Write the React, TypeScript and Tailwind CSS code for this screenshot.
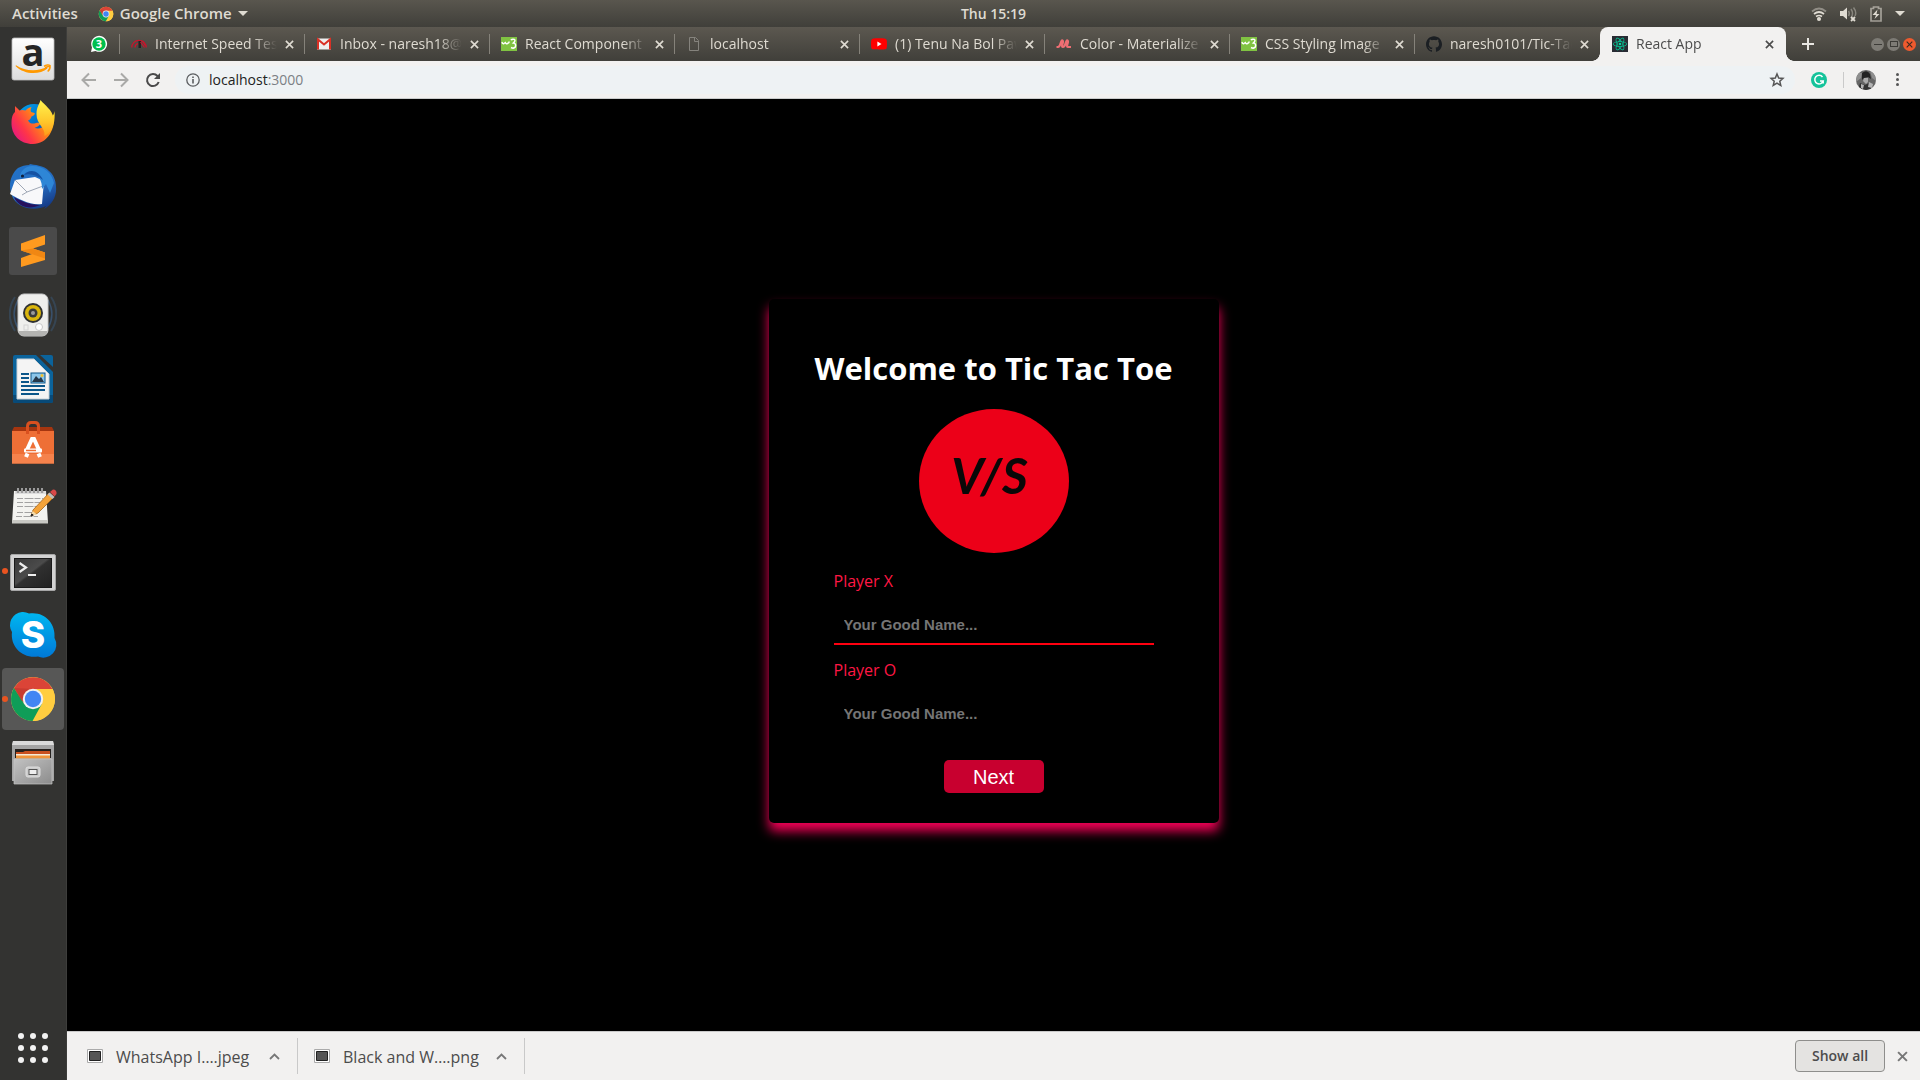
import React from "react";
import { SiGithub, SiYoutube, SiReact } from "react-icons/si";

const ui = "font-['Open_Sans','Noto_Sans',sans-serif]";

function ChromeIcon({ size }: { size: number }) {
  return (
    <svg width={size} height={size} viewBox="0 0 48 48" aria-hidden="true">
      <circle cx="24" cy="24" r="22" fill="#fc4" />
      <path d="M24 24 43.4 14A22 22 0 0 0 5 13L14.5 28Z" fill="#db4437" />
      <path d="M24 14H43.6A22 22 0 0 1 23.5 46L32.8 29Z" fill="#ffcd40" />
      <path d="M5 13A22 22 0 0 0 23.5 46L32.8 29 24 34 15.3 29Z" fill="#0f9d58" />
      <path d="M5 13 12.5 26 16 19Q20 14 26 14Z" fill="#b9352b" opacity=".55" />
      <circle cx="24" cy="24" r="10.2" fill="#f1f1f1" />
      <circle cx="24" cy="24" r="8.2" fill="#4285f4" />
    </svg>
  );
}

function AmazonIcon() {
  return (
    <svg width="48" height="48" viewBox="0 0 48 48" className="overflow-visible" aria-hidden="true">
      <defs>
        <linearGradient id="amz" x2="0" y2="1">
          <stop stopColor="#fff" />
          <stop offset="1" stopColor="#dcdcdc" />
        </linearGradient>
      </defs>
      <rect x="3" y="3" width="42" height="42" rx="2" fill="url(#amz)" stroke="#bdbdbd" strokeWidth=".8" />
      <text x="24" y="31" textAnchor="middle" fontFamily="Open Sans, sans-serif" fontWeight="700" fontSize="38" fill="#252525">a</text>
      <path d="M6.500 31c9 9 24 9 32 2.500l-.8-1.700C30 36.500 16 36.500 7 30.200Z" fill="#ff9900" />
      <path d="M35 31.300c2-1.500 5-1.500 6-.8.300 2-.7 4.700-2.300 6M36 32.500l4.500-1.200" fill="none" stroke="#ff9900" strokeWidth="1.500" />
    </svg>
  );
}

function FirefoxIcon() {
  return (
    <svg width="48" height="48" viewBox="0 0 48 48" aria-hidden="true">
      <defs>
        <linearGradient id="ffa" x1="0" y1=".8" x2="1" y2=".2">
          <stop stopColor="#e31587" />
          <stop offset=".3" stopColor="#ff3647" />
          <stop offset=".65" stopColor="#ff8a16" />
          <stop offset="1" stopColor="#ffe226" />
        </linearGradient>
        <linearGradient id="ffb" x2="0" y2="1">
          <stop stopColor="#fff44f" />
          <stop offset=".6" stopColor="#ffc72b" />
          <stop offset="1" stopColor="#ff9a1a" />
        </linearGradient>
        <linearGradient id="ffc" x2="1" y2="1">
          <stop stopColor="#00a8f0" />
          <stop offset="1" stopColor="#0a3fa8" />
        </linearGradient>
      </defs>
      <circle cx="25" cy="23" r="18" fill="url(#ffc)" />
      <path d="M6 7c1 1 3 3 4.500 4.500 2-.8 4-.7 6-.1C18 9.500 20 8.500 22.500 8c-1 2-1 3.500-.5 5l3.500 1c1 1-.5 2.500-3 3.500-.5 1.500-1 3-3.500 4 2 3.500 5 3.500 8 2.500 3-1 5 .5 3.500 2-2 2-4 2.500-5 3 8 2 14-3 13-12 3 2 6 1 7-5 1.500 19-7.500 33-21.500 33C11 45 2 36 2.500 23 2.800 17 4 15 6 13Z" fill="url(#ffa)" />
      <path d="M31.500 1c4 5 12 10 13 18 .8 9-3 15-9 18 1-9-8-11-8-22 0-7 3-10 4-14Z" fill="url(#ffb)" />
    </svg>
  );
}

function ThunderbirdIcon() {
  return (
    <svg width="48" height="48" viewBox="0 0 48 48" aria-hidden="true">
      <defs>
        <linearGradient id="tba" x1=".2" x2=".7" y2="1">
          <stop stopColor="#2173c9" />
          <stop offset=".6" stopColor="#2569bd" />
          <stop offset="1" stopColor="#143a86" />
        </linearGradient>
      </defs>
      <path d="M20 1c5 1 15 1 20 7 4 3 7 9 7 16 1 9-4 18-12 22l2-3c-12 6-29 2-34-10C-1 23 1 12 9 5c4-2 7-3 12-3Z" fill="url(#tba)" />
      <path d="M5 34c6 3 14 8 26 8-10 5-22 2-26-8Z" fill="#26115e" />
      <path d="M6 17 26 14 35 18 33 41C22 43 10 36 1 31Z" fill="#f8f8fa" />
      <path d="m6 17 12 12 16-6M18 29l-5 3" fill="none" stroke="#9fa7b5" strokeWidth="1" />
      <path d="M11 16C15 8 24 6 28 12c4 5 5 8 5 14l4-5 4 9 4-10c-2-10-10-17-22-17C16 3 10 9 11 16Z" fill="#2e86d6" />
      <path d="M15 12c5-6 14-6 19 5-6-5-13-7-19-5Z" fill="#1552a3" />
      <circle cx="13.500" cy="13" r="1.600" fill="#10203c" />
    </svg>
  );
}

function SublimeIcon() {
  return (
    <svg width="48" height="48" viewBox="0 0 48 48" aria-hidden="true">
      <rect width="48" height="48" rx="3" fill="#4a4a4a" />
      <path d="M12 16.500 36 8v9.500L24 21.500l12 4V33L12 40v-9l11-4-11-3.500Z" fill="#ff9a1f" />
      <path d="m12 23.500 24 8v-6l-12-4Z" fill="#f08713" />
    </svg>
  );
}

function SpeakerIcon() {
  return (
    <svg width="48" height="48" viewBox="0 0 48 48" aria-hidden="true">
      <g fill="none" stroke="#3d6695">
        <path d="M6 6C-1 16-1 30 6 40M42 6c7 10 7 24 0 34" opacity=".35" strokeWidth="2" />
        <path d="M9 9C4 18 4 28 9 37M39 9c5 9 5 19 0 28" opacity=".6" strokeWidth="1.500" />
      </g>
      <rect x="9" y="3" width="30" height="42" rx="6" fill="#efefed" stroke="#c9c9c9" />
      <path d="M10 40h28v2q-1 3-5 3H15q-4 0-5-3Z" fill="#b3b3b1" />
      <circle cx="24" cy="22" r="10" fill="#2f3133" />
      <circle cx="24" cy="22" r="8" fill="#d9b50c" />
      <circle cx="24" cy="22" r="4.500" fill="#3a3b3c" />
      <circle cx="24" cy="22" r="2" fill="#9a9a9a" />
      <circle cx="30" cy="36" r="3.500" fill="#fff" stroke="#c8c8c8" />
      <rect x="15" y="34" width="4" height="5" fill="none" stroke="#d4d4d4" />
    </svg>
  );
}

function WriterIcon() {
  return (
    <svg width="48" height="48" viewBox="0 0 48 48" aria-hidden="true">
      <path d="M6 0H27L44 17V46q0 2-2 2H6q-2 0-2-2V2Q4 0 6 0Z" fill="#0b639b" />
      <path d="M4 40h40v6q0 2-2 2H6q-2 0-2-2Z" fill="#084a78" />
      <path d="M8 4H25L40 19V44H8Z" fill="#f4f4f4" stroke="#c7d0d6" />
      <path d="M31 0h11q2 0 2 2v10Z" fill="#0b639b" />
      <path d="M12 19h8M12 23h8M12 27h8M12 31h24M12 35h24M12 39h18" stroke="#0b568a" strokeWidth="2" />
      <rect x="22" y="18" width="14" height="10" fill="#8cc6ea" stroke="#0b568a" />
      <path d="m23 27 4-6 3 3 2-2 3 5Z" fill="#26384a" />
      <circle cx="33" cy="20.500" r="1.500" fill="#f2c230" />
    </svg>
  );
}

function SoftwareIcon() {
  return (
    <svg width="48" height="48" viewBox="0 -1 48 48" aria-hidden="true">
      <path d="M3 11 5 7H43l2 4V20H3Z" fill="#a5350f" />
      <path d="M3 11H45V43.500H3Z" fill="#ee6f36" />
      <path d="M3 34H45v9.500H3Z" fill="#f5824c" />
      <path d="M18.500 14V6.500Q18.500 2.500 22 2.500h4q3.500 0 3.500 4V14" fill="none" stroke="#d9501f" strokeWidth="3" />
      <path d="m17.500 31 5.500-12h2l5.500 12M17 37l1.500-3.500M31 37l-1.500-3.500" fill="none" stroke="#fff" strokeWidth="4" />
      <rect x="15" y="28.500" width="18" height="4" rx="1" fill="#fff" />
      <path d="M17 30.500h10" stroke="#ee6f36" strokeWidth="1.500" />
    </svg>
  );
}

function NotesIcon() {
  return (
    <svg width="48" height="48" viewBox="0 0 48 48" aria-hidden="true">
      <path d="M5 8H37l2 32H3Z" fill="#f3f3f0" />
      <path d="M3.200 37H39v3.500H3Z" fill="#c9c9c4" />
      <path d="M6 8h31v3H6Z" fill="#ddd" />
      <g stroke="#4a4a4a" strokeWidth="2.200" fill="none">
        <path d="M9 5v5M13 5v5M17 5v5M21 5v5M25 5v5M29 5v5M33 5v5" />
      </g>
      <g stroke="#fff" strokeWidth=".9">
        <path d="M9 5v5M13 5v5M17 5v5M21 5v5M25 5v5M29 5v5M33 5v5" />
      </g>
      <g stroke="#a2a2a2" strokeWidth="1.100" strokeDasharray="6 1.500 9 1">
        <path d="M8 15.500h26M8 19.500h25M8 23.500h22M8 29.500h15M7 33.500h22" />
      </g>
      <path d="m22 33 2-6L40 10l5 4-16 16Z" fill="#f3a33a" stroke="#a5651b" strokeWidth=".8" />
      <path d="m22 33 1.500-5 4.500 3.500Z" fill="#f2d9a8" />
      <path d="m22 33 .7-2 1.500 1Z" stroke="#222" fill="#222" />
      <path d="m38.500 11.500 5 4.500 2-2-5-4.500Z" fill="#bdbdbd" />
      <path d="m41 9 3-2.500q4 0 3.500 4.500L45.500 13.500Z" fill="#d84848" />
    </svg>
  );
}

function TerminalIcon() {
  return (
    <svg width="48" height="48" viewBox="0 -2 48 48" aria-hidden="true">
      <defs>
        <linearGradient id="term" x2="1" y2="1">
          <stop stopColor="#3a3a3a" />
          <stop offset=".45" stopColor="#4b4b4b" />
          <stop offset=".5" stopColor="#303030" />
          <stop offset="1" stopColor="#222" />
        </linearGradient>
      </defs>
      <rect x="1.500" y="5.500" width="45" height="36" rx="1.500" fill="#d2d2d2" stroke="#a6a6a6" />
      <rect x="5" y="9" width="38" height="30" fill="#1a1a1a" />
      <rect x="6" y="10" width="36" height="28" fill="url(#term)" />
      <path d="m10.500 14 6.500 4.500-6.500 4.500M19 26h8" fill="none" stroke="#eee" strokeWidth="2.200" />
    </svg>
  );
}

function SkypeIcon() {
  return (
    <svg width="48" height="48" viewBox="0 0 48 48" className="overflow-visible" aria-hidden="true">
      <defs>
        <linearGradient id="sky" x2="0" y2="1">
          <stop stopColor="#00b7f0" />
          <stop offset="1" stopColor="#0078d7" />
        </linearGradient>
      </defs>
      <path d="M13 1a12.500 12.500 0 0 1 7 1.500C35 0 47 12 45.500 27A13 13 0 0 1 29 45.500C14 48 1 36 3 21A13 13 0 0 1 13 1Z" fill="url(#sky)" />
      <text x="24" y="37" textAnchor="middle" fontFamily="Inter, sans-serif" fontWeight="800" fontSize="37" fill="#fff">S</text>
    </svg>
  );
}

function FilesIcon() {
  return (
    <svg width="48" height="48" viewBox="0 0 48 48" aria-hidden="true">
      <defs>
        <linearGradient id="fil" x2="1" y2="1">
          <stop stopColor="#c2c2c2" />
          <stop offset="1" stopColor="#8c8c8c" />
        </linearGradient>
      </defs>
      <path d="M4 2H44l1 4V42H3V6Z" fill="#a4a4a4" />
      <path d="M4 2H44l1 4H3Z" fill="#dadada" />
      <rect x="6" y="10" width="36" height="9" fill="#26211e" />
      <path d="M7 13h7l2-1h25v7H7Z" fill="#c8501f" />
      <path d="M7 15h34v4H7Z" fill="#f5ead9" />
      <path d="M7 16.500h34v3H7Z" fill="#f0953b" />
      <path d="M5 20H43V45H5Z" fill="url(#fil)" stroke="#c5c5c5" strokeWidth=".7" />
      <rect x="17" y="28" width="14" height="10" rx="2" fill="#ccc" stroke="#dedede" />
      <rect x="20" y="30.500" width="8" height="5" fill="#eee" stroke="#555" />
    </svg>
  );
}

const dock = [
  { label: "Amazon", icon: <AmazonIcon /> },
  { label: "Firefox", icon: <FirefoxIcon /> },
  { label: "Thunderbird", icon: <ThunderbirdIcon /> },
  { label: "Sublime Text", icon: <SublimeIcon /> },
  { label: "Rhythmbox", icon: <SpeakerIcon /> },
  { label: "LibreOffice Writer", icon: <WriterIcon /> },
  { label: "Ubuntu Software", icon: <SoftwareIcon /> },
  { label: "Text Editor", icon: <NotesIcon /> },
  { label: "Terminal", icon: <TerminalIcon />, running: true },
  { label: "Skype", icon: <SkypeIcon /> },
  { label: "Google Chrome", icon: <ChromeIcon size={48} />, running: true, active: true },
  { label: "Files", icon: <FilesIcon /> },
];

function Dock() {
  return (
    <nav aria-label="Dock" className="flex w-[67px] shrink-0 flex-col items-center border-r border-[#3d3d3b] bg-[#333331]">
      {dock.map((d) => (
        <button key={d.label} aria-label={d.label} className="relative flex h-16 w-full items-center justify-center">
          <span className={d.active ? "flex size-[62px] items-center justify-center rounded bg-[#575756]" : "flex size-[62px] items-center justify-center"}>
            {d.icon}
          </span>
          {d.running && <span className="absolute top-1/2 left-0.5 size-1.5 -translate-y-1/2 rounded-full bg-[#e95420]" />}
        </button>
      ))}
      <button aria-label="Show Applications" className="mt-auto mb-[17px] grid grid-cols-3 gap-1.5">
        {Array.from({ length: 9 }, (_, i) => (
          <span key={i} className="size-1.5 rounded-full bg-[#f2f2f2]" />
        ))}
      </button>
    </nav>
  );
}

function W3Icon() {
  return (
    <svg width="16" height="16" viewBox="0 0 16 16" aria-hidden="true">
      <path d="M0 1h16v14H0Z" fill="#80c342" />
      <path d="M1 6q.5 2.200 2 1.500L4.300 6.500q.7 1.700 2.200 1Q8 7 8.300 5.500" fill="none" stroke="#fff" strokeWidth="1.400" />
      <path d="M9.800 4q1.500-1.200 3.500-.6Q15 4.500 12.300 7 15.500 7.500 14.300 11q-1.500 2-4.300.5" fill="none" stroke="#fff" strokeWidth="1.500" />
    </svg>
  );
}

const tabs = [
  {
    title: "Internet Speed Test",
    icon: (
      <svg width="16" height="16" viewBox="0 0 16 16" fill="none" aria-hidden="true">
        <path d="M.8 11.500a7.200 7.200 0 0 1 14.400 0M4 11.500A4 4 0 0 1 7 7.700" stroke="#c8142c" strokeWidth="1.300" />
        <path d="M7.500 5h2.500v7H7.500Z" fill="#222" />
        <path d="m9.500 6 4 5.500M11.500 5l3 5" stroke="#c8142c" strokeWidth="1.200" />
      </svg>
    ),
  },
  {
    title: "Inbox - naresh18@gmail",
    icon: (
      <svg width="16" height="16" viewBox="0 0 16 16" aria-hidden="true">
        <path d="M1 2.500h14v11H1Z" fill="#eee" />
        <path d="M2 13.500V3.500l6 5 6-5v10" fill="none" stroke="#d93025" strokeWidth="2" />
      </svg>
    ),
  },
  { title: "React Component", icon: <W3Icon /> },
  {
    title: "localhost",
    icon: (
      <svg width="16" height="16" viewBox="0 0 16 16" fill="none" stroke="#85837d" aria-hidden="true">
        <path d="M3.500 1.500h6l3 3v10h-9ZM8.500 1.500v4h4" />
      </svg>
    ),
  },
  { title: "(1) Tenu Na Bol Pawaan", icon: <SiYoutube size={16} color="#f00" className="bg-[linear-gradient(white,white)] bg-[length:6px_6px] bg-center bg-no-repeat" /> },
  {
    title: "Color - Materialize",
    icon: (
      <svg width="16" height="16" viewBox="0 0 16 16" fill="none" stroke="#ee6e73" strokeWidth="2.200" aria-hidden="true">
        <path d="M.5 11h1.500q1.500 0 2.500-3.500t2-3q1 .5 0 3.500t.5 3q1.500 0 2.500-3.500t2-3q1 .5 0 3.500t.5 3h3" />
      </svg>
    ),
  },
  { title: "CSS Styling Image", icon: <W3Icon /> },
  { title: "naresh0101/Tic-Tac", icon: <SiGithub size={16} color="#1b1f23" /> },
  { title: "React App", icon: <SiReact size={16} color="#00d8a0" className="bg-[#282c34] p-px" />, active: true },
];

function Cross({ size = 9, color = "currentColor", width = 1.8 }: { size?: number; color?: string; width?: number }) {
  return (
    <svg width={size} height={size} viewBox="0 0 10 10" stroke={color} strokeWidth={width} aria-hidden="true">
      <path d="m1 1 8 8M9 1 1 9" />
    </svg>
  );
}

function TabStrip() {
  return (
    <div className="flex h-[34px] bg-linear-to-b from-[#5c5850] to-[#403f3a]">
      <button aria-label="WhatsApp" className="flex w-[52px] shrink-0 items-center justify-end pr-[11px]">
        <svg width="18" height="18" viewBox="0 0 18 18" className="overflow-visible" aria-hidden="true">
          <path d="M1 17 2 12.500A8 8 0 1 1 5.500 16Z" fill="#fff" />
          <circle cx="9" cy="9" r="6.700" fill="#00bf4f" />
          <text x="9" y="13" textAnchor="middle" fontFamily="Open Sans, sans-serif" fontWeight="700" fontSize="11" fill="#fff">3</text>
        </svg>
      </button>
      {tabs.map((t) => (
        <div key={t.title} className={t.active ? "relative ml-px flex w-[186px] items-center rounded-t-lg bg-[#f2f1f0] pr-3 pl-3 text-[#4c4c4c]" : "relative flex w-[185px] items-center pr-2.5 pl-3 text-[#dfdbd2]"}>
          {t.active ? (
            <>
              <span className="absolute bottom-0 -left-2 size-2 bg-[radial-gradient(circle_at_0_0,transparent_7.5px,#f2f1f0_8px)]" />
              <span className="absolute -right-2 bottom-0 size-2 bg-[radial-gradient(circle_at_100%_0,transparent_7.5px,#f2f1f0_8px)]" />
            </>
          ) : (
            <span className="absolute top-[7px] left-0 h-5 w-px bg-[#85827a]" />
          )}
          <span className="shrink-0">{t.icon}</span>
          <a href="#" className="ml-2 min-w-0 flex-1 overflow-hidden text-sm whitespace-nowrap [mask-image:linear-gradient(to_right,black_80%,transparent)]">
            {t.title}
          </a>
          <button aria-label={"Close " + t.title} className="ml-2 shrink-0">
            <Cross />
          </button>
        </div>
      ))}
      <button aria-label="New tab" className="ml-4 flex items-center text-[#e8e6e2]">
        <svg width="12" height="12" viewBox="0 0 12 12" stroke="currentColor" strokeWidth="2" aria-hidden="true">
          <path d="M6 0v12M0 6h12" />
        </svg>
      </button>
      <div className="mr-1 ml-auto flex items-center gap-[3px]">
        <button aria-label="Minimize" className="flex size-[13px] items-center justify-center rounded-full bg-[#7d7b75]">
          <span className="h-px w-2 bg-[#3c3b37]" />
        </button>
        <button aria-label="Maximize" className="flex size-[13px] items-center justify-center rounded-full bg-[#7d7b75]">
          <span className="h-1.5 w-2 border border-[#3c3b37]" />
        </button>
        <button aria-label="Close window" className="flex size-[13px] items-center justify-center rounded-full bg-[#ee5a2e]">
          <Cross size={7} color="#3c2a20" width={1.6} />
        </button>
      </div>
    </div>
  );
}

function Toolbar() {
  return (
    <div className="flex h-[38px] items-center border-b border-[#c9cccc] bg-[#f2f1f0] pr-5 pl-3.5 text-[#555]">
      <div className="flex gap-4">
        <button aria-label="Back" className="text-[#a9a9a7]">
          <svg width="16" height="16" viewBox="0 0 16 16" fill="none" stroke="currentColor" strokeWidth="2" aria-hidden="true">
            <path d="M15 8H2M8 1.500 1.500 8 8 14.500" />
          </svg>
        </button>
        <button aria-label="Forward" className="text-[#a9a9a7]">
          <svg width="16" height="16" viewBox="0 0 16 16" fill="none" stroke="currentColor" strokeWidth="2" aria-hidden="true">
            <path d="M1 8h13M8 1.500 14.500 8 8 14.500" />
          </svg>
        </button>
        <button aria-label="Reload">
          <svg width="16" height="16" viewBox="0 0 16 16" fill="none" stroke="#4a4a4a" strokeWidth="2" aria-hidden="true">
            <path d="M13.700 10A6 6 0 1 1 12.500 4l1 1.200" />
            <path d="M15 1v6H9Z" fill="#4a4a4a" stroke="none" />
          </svg>
        </button>
      </div>
      <div className="ml-3.5 flex h-7 flex-1 items-center rounded-full bg-[#eef2f4] pr-2.5 pl-[11px]">
        <svg width="14" height="14" viewBox="0 0 14 14" fill="none" stroke="#5a5d60" strokeWidth="1.300" aria-hidden="true">
          <circle cx="7" cy="7" r="6.200" />
          <path d="M7 6v4.500M7 3.500v1.400" strokeWidth="1.600" />
        </svg>
        <a href="#" className="ml-[9px] flex-1 text-sm text-[#222]">
          localhost<span className="text-[#7c8084]">:3000</span>
        </a>
        <button aria-label="Bookmark this page">
          <svg width="16" height="16" viewBox="0 0 16 16" fill="none" stroke="#555" strokeWidth="1.500" aria-hidden="true">
            <path d="m8 2 1.700 4 4.300.4-3.200 2.900 1 4.200L8 11.200l-3.800 2.300 1-4.200L2 6.400 6.300 6Z" />
          </svg>
        </button>
      </div>
      <button aria-label="Grammarly" className="ml-4">
        <svg width="16" height="16" viewBox="0 0 16 16" fill="none" aria-hidden="true">
          <circle cx="8" cy="8" r="8" fill="#15c39a" />
          <path d="M11.500 5A4.300 4.300 0 1 0 12.200 9H9M12.200 8.500v3" stroke="#fff" strokeWidth="1.500" />
        </svg>
      </button>
      <span className="ml-4 h-4 w-px bg-[#cacaca]" />
      <button aria-label="Profile" className="ml-3">
        <svg width="20" height="20" viewBox="0 0 20 20" aria-hidden="true">
          <defs>
            <clipPath id="av"><circle cx="10" cy="10" r="10" /></clipPath>
          </defs>
          <g clipPath="url(#av)">
            <path d="M0 0h20v20H0Z" fill="#666" />
            <path d="M0 3h6l-1 5-5 4ZM14 1h6v10l-4-3Z" fill="#8e8e8e" />
            <path d="M6 3q5-4 8 1l1 5-3-2-4 1-2 2Z" fill="#222" />
            <path d="M8 8l4 0v4l-2 2-3-3Z" fill="#aaa" />
            <path d="M2 20l2-7 5 2 4-2 4 7Z" fill="#333" />
            <path d="m13 12 4 2-1 4-4-1ZM5 14l3 1-1 4-2-1Z" fill="#b4b4b4" />
          </g>
        </svg>
      </button>
      <button aria-label="Menu" className="ml-5 flex w-1 flex-col gap-0.5">
        <span className="size-[3px] rounded-full bg-[#555]" />
        <span className="size-[3px] rounded-full bg-[#555]" />
        <span className="size-[3px] rounded-full bg-[#555]" />
      </button>
    </div>
  );
}

function TopBar() {
  return (
    <header className="grid h-[27px] grid-cols-3 items-center bg-linear-to-b from-[#59564e] to-[#403f3a] px-3 text-[15px] font-semibold text-[#dfdbd2]">
      <div className="flex items-center">
        <button>Activities</button>
        <button className="ml-5 flex items-center">
          <ChromeIcon size={16} />
          <span className="ml-1.5">Google Chrome</span>
          <svg width="10" height="5" viewBox="0 0 10 5" className="ml-1.5" fill="currentColor" aria-hidden="true"><path d="M0 0h10L5 5Z" /></svg>
        </button>
      </div>
      <button className="pl-[67px] text-center text-sm font-semibold">Thu 15:19</button>
      <div className="flex items-center justify-end gap-3 pr-[3px]">
        <svg width="16" height="16" viewBox="0 0 16 16" fill="none" stroke="currentColor" strokeWidth="1.700" aria-hidden="true">
          <path d="M1 5.500Q8-.5 15 5.500" opacity=".45" />
          <path d="M3 8Q8 4 13 8M5 10.500Q8 8.500 11 10.500" />
          <circle cx="8" cy="13" r="1.200" fill="currentColor" />
        </svg>
        <svg width="18" height="16" viewBox="0 0 18 16" fill="none" stroke="currentColor" strokeWidth="1.500" aria-hidden="true">
          <path d="M1 5h3l4-3.500v12L4 10H1Z" fill="currentColor" stroke="none" />
          <path d="M9.500 5q1.500 2.500 0 5M12 3q3 4.500 0 9M14.500 1.500Q18 6 16 10" opacity=".4" />
          <path d="m12 11 4 4M16 11l-4 4" strokeWidth="1.800" />
        </svg>
        <svg width="14" height="16" viewBox="1 0 14 16" fill="none" stroke="currentColor" aria-hidden="true">
          <path d="M3 2.500h2.500V1h5v1.500H13v12.500H3Z" strokeWidth="1.700" opacity=".6" />
          <path d="M9.500 3.500 4.500 9H8l-1.500 4L11.500 8H8.500Z" fill="currentColor" stroke="none" />
        </svg>
        <svg width="10" height="5" viewBox="0 0 10 5" fill="currentColor" aria-hidden="true"><path d="M0 0h10L5 5Z" /></svg>
      </div>
    </header>
  );
}

function PlayerField({ id, label, line }: { id: string; label: string; line: string }) {
  return (
    <div className="flex flex-col gap-2.5">
      <label htmlFor={id} className="text-base leading-6 text-[#ff1744]">{label}</label>
      <input
        id={id}
        placeholder="Your Good Name..."
        className={"h-[42px] w-full border-b-2 bg-transparent px-2.5 pt-0.5 font-['Liberation_Sans',sans-serif] text-[15px] font-bold text-white outline-none placeholder:text-[#757575] " + line}
      />
    </div>
  );
}

function Game() {
  return (
    <main className="flex flex-1 items-center justify-center bg-black pb-2">
      <form className="flex w-[450px] flex-col items-center rounded-[5px] bg-black pt-[45px] pb-[30px] shadow-[0_8px_12px_#f50057]">
        <h1 className="text-[31px] leading-12 font-bold text-white">Welcome to Tic Tac Toe</h1>
        <div className="mt-[17px] flex h-36 w-[150px] items-center justify-center rounded-[50%] bg-[#ec0018] pr-2 pb-3 font-['Lato',sans-serif] text-[50px] font-bold text-[#0a0808] italic">
          V/S
        </div>
        <div className="mt-4 flex w-80 flex-col gap-[13px]">
          <PlayerField id="player-x" label="Player X" line="border-[#ff0010]" />
          <PlayerField id="player-o" label="Player O" line="border-transparent" />
        </div>
        <button type="button" className="mt-[26px] h-[33px] w-[100px] rounded-[5px] bg-[#c8002f] font-['Liberation_Sans',sans-serif] text-xl leading-none text-white">
          Next
        </button>
      </form>
    </main>
  );
}

function Downloads() {
  return (
    <footer className="flex h-[49px] items-center border-t border-[#c9c9c9] bg-[#f2f1f0] pr-3 text-base text-[#4c4c4c]">
      {["WhatsApp I….jpeg", "Black and W….png"].map((name) => (
        <div key={name} className="flex h-9 w-[227px] items-center border-r border-[#c9c9c9] pr-[17px] pl-4 first:w-[231px] first:pl-5">
          <svg width="16" height="14" viewBox="0 0 16 14" className="shrink-0" aria-hidden="true">
            <path d="M.5.500h15v13H.5Z" fill="#fff" stroke="#aaa" />
            <path d="M2.500 2.500h11v9h-11Z" fill="#555" stroke="#222" />
          </svg>
          <button className="ml-[13px] pt-0.5 whitespace-nowrap">{name}</button>
          <button aria-label={"Options for " + name} className="ml-auto">
            <svg width="11" height="7" viewBox="0 0 11 7" fill="none" stroke="#777" strokeWidth="1.800" aria-hidden="true"><path d="m1 6 4.500-4.500L10 6" /></svg>
          </button>
        </div>
      ))}
      <button className="ml-auto h-8 w-[90px] rounded border border-[#8e8e8c] bg-[#e4e3e1] text-sm font-semibold">Show all</button>
      <button aria-label="Close downloads bar" className="ml-3 text-[#777]"><Cross size={11} /></button>
    </footer>
  );
}

export default function App() {
  return (
    <div className={"flex min-h-screen flex-col " + ui}>
      <TopBar />
      <div className="flex flex-1">
        <Dock />
        <div className="flex min-w-0 flex-1 flex-col">
          <TabStrip />
          <Toolbar />
          <Game />
          <Downloads />
        </div>
      </div>
    </div>
  );
}
